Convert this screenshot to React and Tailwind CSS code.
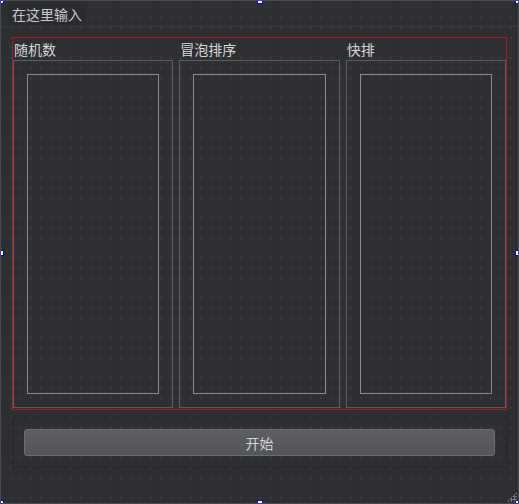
import React from 'react';

const cjk = { fontFamily: '"Noto Sans CJK SC", "Noto Sans", sans-serif' };

const Handle = ({ className }) => (
  <div className={`absolute w-[6px] h-[6px] bg-white border border-[#0000ff] ${className}`} />
);

const Column = ({ title }) => (
  <div className="flex flex-col">
    <div className="h-[22px] flex items-center pl-[1px] text-[14px] text-[#d6d8da] leading-none" style={cjk}>
      {title}
    </div>
    <div className="h-[348px] border border-[#5c5d60] p-[13px]">
      <div className="w-full h-full border border-[#8a8b8d]" />
    </div>
  </div>
);

const App = () => {
  return (
    <div
      className="relative w-[519px] h-[504px] overflow-hidden bg-[#2e2f32] border border-[#4c4d50] bg-[radial-gradient(circle,#414246_0.6px,transparent_0.9px)] bg-[length:10px_10px] bg-[position:5px_2px]"
      style={cjk}
    >
      {/* menu bar */}
      <div className="h-[26px] border-b border-[#3a3b3e] flex items-center">
        <div className="ml-[7px] h-[22px] px-[4px] flex items-center bg-[#2b2c2f] text-[14px] text-[#c9cbcd] leading-none">
          在这里输入
        </div>
      </div>

      {/* layout with three group boxes */}
      <div className="ml-[12px] mt-[11px] w-[493px] h-[371px] ring-1 ring-[#b3161b] grid grid-cols-3 gap-[6px]">
        <Column title="随机数" />
        <Column title="冒泡排序" />
        <Column title="快排" />
      </div>

      {/* button layout */}
      <div className="ml-[11px] mt-[8px] w-[495px] h-[51px] border border-dotted border-[#1f2022] flex items-center pl-[11px] pr-[11px]">
        <button
          className="w-full h-[27px] rounded-[3px] border border-[#6c6d70] bg-gradient-to-b from-[#5e5f62] to-[#535457] text-[14px] text-[#d2d3d5] leading-none"
          style={cjk}
        >
          开始
        </button>
      </div>

      {/* resize grip */}
      <div className="absolute right-[1px] bottom-[1px] w-[10px] h-[10px] bg-[radial-gradient(circle,#7a7b7e_1px,transparent_1.2px)] bg-[length:3px_3px] [clip-path:polygon(100%_0,100%_100%,0_100%)]" />

      {/* selection handles */}
      <Handle className="-left-[3px] -top-[3px]" />
      <Handle className="left-[256px] -top-[3px]" />
      <Handle className="-right-[3px] -top-[3px]" />
      <Handle className="-left-[3px] top-[249px]" />
      <Handle className="-right-[3px] top-[249px]" />
      <Handle className="-left-[3px] -bottom-[3px]" />
      <Handle className="left-[256px] -bottom-[3px]" />
      <Handle className="-right-[3px] -bottom-[3px]" />
    </div>
  );
};

export default App;
